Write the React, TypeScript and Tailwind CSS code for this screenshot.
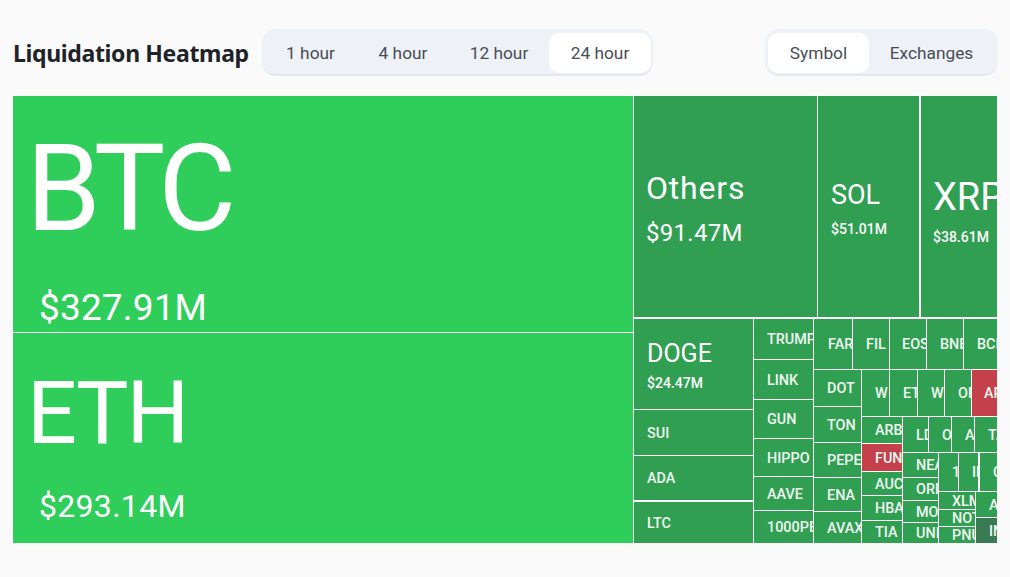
import React from "react";

const plex = "font-['Roboto',sans-serif]";

function Cell({ c = "", label, red, dark, pl = "pl-[13px]" }: { c?: string; label: string; red?: boolean; dark?: boolean; pl?: string }) {
  const bg = red ? "bg-[#c4414b]" : dark ? "bg-[#387b52]" : "bg-[#309f52]";
  return (
    <div className={`${c} ${bg} ${pl} pt-[2px] flex items-center overflow-hidden whitespace-nowrap text-[14.4px] font-medium text-[#f0f7f2] min-w-0 min-h-0`}>
      {label}
    </div>
  );
}

function Big({ c, name, value, nameC, valueC, bg }: { c: string; name: string; value: string; nameC: string; valueC: string; bg: string }) {
  return (
    <div className={`${c} ${bg} relative overflow-hidden whitespace-nowrap text-white flex flex-col min-w-0 min-h-0`}>
      <div className={nameC}>{name}</div>
      <div className={valueC}>{value}</div>
    </div>
  );
}

function Tab({ label, active, c }: { label: string; active?: boolean; c: string }) {
  return (
    <div className={`${c} h-[40px] pt-[2px] flex items-center justify-center rounded-[10px] text-[17.3px] text-[#474d57] ${active ? "bg-white" : ""}`}>
      {label}
    </div>
  );
}

export default function App() {
  return (
    <div className={`${plex} w-[1010px] h-[577px] bg-[#fafafa] overflow-hidden pt-[29px] pl-[13px]`}>
      <div className="flex items-center w-[985px] h-[47px]">
        <h1 className="font-['Noto_Sans',sans-serif] pt-[2px] text-[23px] font-bold text-[#1e2329] tracking-[-0.35px] w-[249px]">Liquidation Heatmap</h1>
        <div className="flex items-start h-[47px] w-[391px] pl-[2px] pt-[4px] rounded-[14px] bg-[#eef1f5] border-b-2 border-[#e4e7ec]">
          <Tab label="1 hour" c="w-[93px]" />
          <Tab label="4 hour" c="w-[92px]" />
          <Tab label="12 hour" c="w-[100px]" />
          <Tab label="24 hour" active c="w-[102px]" />
        </div>
        <div className="ml-auto flex items-start h-[47px] w-[233px] pl-[3px] pt-[4px] rounded-[14px] bg-[#eef1f5] border-b-2 border-[#e4e7ec]">
          <Tab label="Symbol" active c="w-[101px]" />
          <Tab label="Exchanges" c="w-[125px]" />
        </div>
      </div>

      <div className="mt-[20px] w-[984px] h-[447px] bg-white flex overflow-hidden">
        {/* Left column */}
        <div className="w-[620px] flex flex-col gap-px">
          <Big
            c="h-[236px]"
            bg="bg-[#2fce5b]"
            name="BTC"
            value="$327.91M"
            nameC="text-[120px] leading-[120px] mt-[33px] ml-[13px] tracking-[-5.5px]"
            valueC="text-[37px] leading-[44px] mt-[37px] ml-[26px] tracking-[0.15px]"
          />
          <Big
            c="flex-1"
            bg="bg-[#2fce5b]"
            name="ETH"
            value="$293.14M"
            nameC="text-[88px] leading-[90px] mt-[35px] ml-[14px] tracking-[-2px]"
            valueC="text-[32px] leading-[40px] mt-[28px] ml-[26px] tracking-[0.3px]"
          />
        </div>

        {/* Right column */}
        <div className="ml-px flex-1 flex flex-col min-w-0">
          <div className="h-[221px] flex">
            <Big
              c="w-[183px]"
              bg="bg-[#309f52]"
              name="Others"
              value="$91.47M"
              nameC="text-[32px] leading-[38px] mt-[73px] ml-[12px] tracking-[0.8px]"
              valueC="text-[24px] leading-[30px] mt-[11px] ml-[12px] tracking-[0.3px]"
            />
            <Big
              c="w-[101px] ml-px"
              bg="bg-[#309f52]"
              name="SOL"
              value="$51.01M"
              nameC="text-[27px] leading-[32px] mt-[83px] ml-[13px]"
              valueC="text-[14px] leading-[18px] mt-[9px] ml-[13px] font-medium"
            />
            <Big
              c="flex-1 ml-[2px]"
              bg="bg-[#309f52]"
              name="XRP"
              value="$38.61M"
              nameC="text-[38px] leading-[42px] mt-[80px] ml-[12px]"
              valueC="text-[14px] leading-[18px] mt-[10px] ml-[12px] font-medium"
            />
          </div>

          <div className="mt-[2px] flex-1 flex min-h-0">
            {/* DOGE column */}
            <div className="w-[119px] flex flex-col">
              <Big
                c="h-[90px]"
                bg="bg-[#309f52]"
                name="DOGE"
                value="$24.47M"
                nameC="text-[25px] leading-[30px] mt-[20px] ml-[13px]"
                valueC="text-[14px] leading-[18px] mt-[5px] ml-[13px] font-medium"
              />
              <Cell c="h-[45px] mt-px" label="SUI" />
              <Cell c="h-[44px] mt-px" label="ADA" />
              <Cell c="flex-1 mt-[2px]" label="LTC" />
            </div>

            {/* Second column */}
            <div className="ml-px w-[59px] flex flex-col">
              <Cell c="h-[40px]" label="TRUMP" />
              <Cell c="h-[39px] mt-px" label="LINK" />
              <Cell c="h-[38px] mt-px" label="GUN" />
              <Cell c="h-[37px] mt-px" label="HIPPO" />
              <Cell c="h-[33px] mt-px" label="AAVE" />
              <Cell c="flex-1 mt-px" label="1000PEPE" />
            </div>

            {/* Remainder */}
            <div className="ml-px flex-1 flex flex-col min-w-0">
              <div className="h-[50px] flex">
                <Cell c="w-[38px]" label="FAR" pl="pl-[14px]" />
                <Cell c="w-[36px] ml-px" label="FIL" />
                <Cell c="w-[36px] ml-px" label="EOS" pl="pl-[12px]" />
                <Cell c="w-[36px] ml-px" label="BNB" />
                <Cell c="flex-1 ml-px" label="BCH" pl="pl-[13px]" />
              </div>
              <div className="mt-px flex-1 flex min-h-0">
                <div className="w-[47px] flex flex-col">
                  <Cell c="h-[36px]" label="DOT" pl="pl-[13px]" />
                  <Cell c="h-[35px] mt-px" label="TON" pl="pl-[13px]" />
                  <Cell c="h-[34px] mt-px" label="PEPE" pl="pl-[13px]" />
                  <Cell c="h-[33px] mt-px" label="ENA" pl="pl-[13px]" />
                  <Cell c="flex-1 mt-px" label="AVAX" pl="pl-[13px]" />
                </div>
                <div className="ml-px flex-1 flex flex-col min-w-0">
                  <div className="h-[46px] flex">
                    <Cell c="w-[27px]" label="W" />
                    <Cell c="w-[27px] ml-px" label="ETC" pl="pl-[13px]" />
                    <Cell c="w-[26px] ml-px" label="WIF" pl="pl-[13px]" />
                    <Cell c="w-[26px] ml-px" label="OP" pl="pl-[13px]" />
                    <Cell c="flex-1 ml-px" red label="APT" pl="pl-[12px]" />
                  </div>
                  <div className="mt-px flex-1 flex min-h-0">
                    <div className="w-[40px] flex flex-col">
                      <Cell c="h-[26px]" label="ARB" pl="pl-[13px]" />
                      <Cell c="h-[27px] mt-px" red label="FUN" pl="pl-[13px]" />
                      <Cell c="h-[23px] mt-px" label="AUCTION" pl="pl-[13px]" />
                      <Cell c="h-[24px] mt-px" label="HBAR" pl="pl-[13px]" />
                      <Cell c="flex-1 mt-px" label="TIA" pl="pl-[13px]" />
                    </div>
                    <div className="ml-px flex-1 flex flex-col min-w-0">
                      <div className="h-[35px] flex">
                        <Cell c="w-[25px]" label="LDO" pl="pl-[13px]" />
                        <Cell c="w-[22px] ml-px" label="ONDO" pl="pl-[13px]" />
                        <Cell c="w-[22px] ml-px" label="ATOM" pl="pl-[13px]" />
                        <Cell c="flex-1 ml-px" label="TAO" pl="pl-[13px]" />
                      </div>
                      <div className="mt-px flex-1 flex min-h-0">
                        <div className="w-[35px] flex flex-col">
                          <Cell c="h-[24px]" label="NEAR" pl="pl-[13px]" />
                          <Cell c="h-[22px] mt-px" label="ORDI" pl="pl-[13px]" />
                          <Cell c="h-[21px] mt-px" label="MOVE" pl="pl-[13px]" />
                          <Cell c="flex-1 mt-px" label="UNI" pl="pl-[13px]" />
                        </div>
                        <div className="ml-px flex-1 flex flex-col min-w-0">
                          <div className="h-[38px] flex">
                            <Cell c="w-[19px]" label="1000" pl="pl-[13px]" />
                            <Cell c="w-[19px] ml-px" label="IP" pl="pl-[13px]" />
                            <Cell c="flex-1 ml-[2px]" label="CRV" pl="pl-[13px]" />
                          </div>
                          <div className="mt-px flex-1 flex min-h-0">
                            <div className="w-[36px] flex flex-col">
                              <Cell c="h-[17px]" label="XLM" pl="pl-[13px]" />
                              <Cell c="h-[16px] mt-px" label="NOT" pl="pl-[13px]" />
                              <Cell c="flex-1 mt-px" label="PNUT" pl="pl-[13px]" />
                            </div>
                            <div className="ml-px flex-1 flex flex-col min-w-0">
                              <Cell c="h-[25px]" label="AVA" pl="pl-[13px]" />
                              <Cell c="flex-1 mt-px" dark label="INJ" pl="pl-[13px]" />
                            </div>
                          </div>
                        </div>
                      </div>
                    </div>
                  </div>
                </div>
              </div>
            </div>
          </div>
        </div>
      </div>
    </div>
  );
}
